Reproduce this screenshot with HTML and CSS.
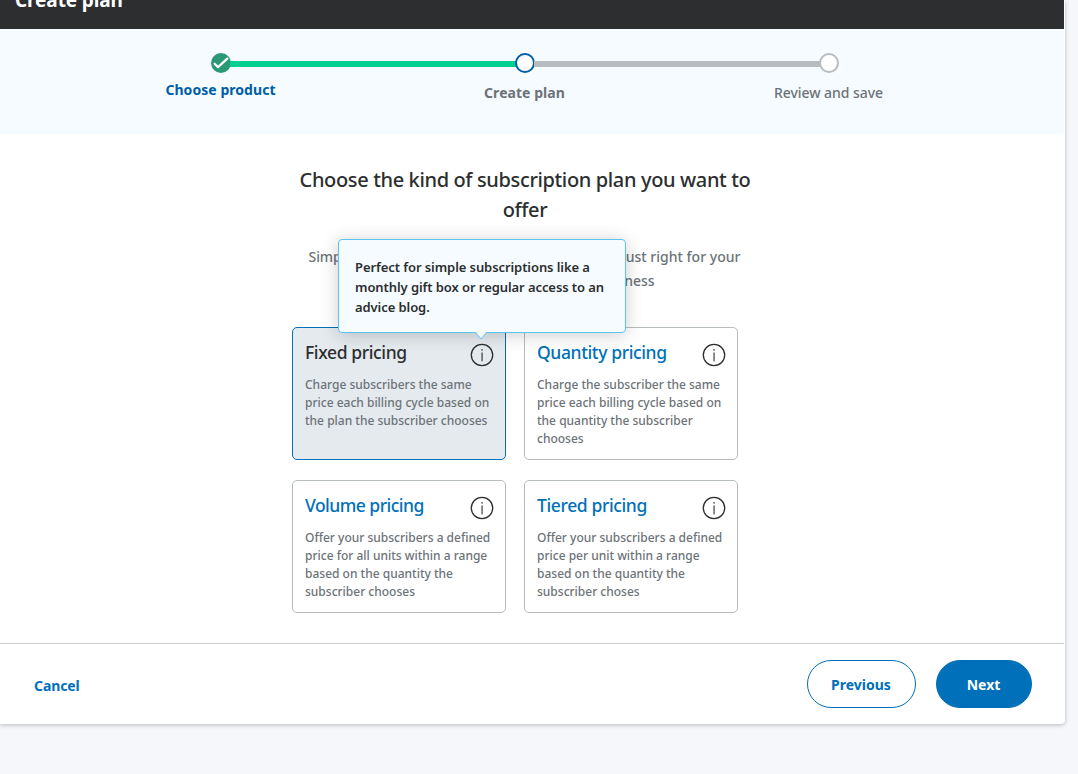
FILE: index.html
```html
<!DOCTYPE html>
<html lang="en">
<head>
<meta charset="utf-8">
<title>Create plan</title>
<link rel="stylesheet" href="styles.css">
</head>
<body>
<svg class="defs" aria-hidden="true"><symbol id="info" viewBox="0 0 24 24"><circle cx="12" cy="12" r="10.7" fill="none" stroke="#2c2e2f" stroke-width="1.3"/><rect x="11.5" y="9.5" width="1.1" height="8.8" fill="#2c2e2f"/><rect x="11.4" y="6.2" width="1.3" height="1.4" fill="#2c2e2f"/></symbol></svg>
<div class="panel">
  <header class="header"><span class="header-title">Create plan</span></header>
  <nav class="stepper">
    <div class="track">
      <svg class="dot" viewBox="0 0 20 20"><circle cx="10" cy="10" r="10" fill="#299976"/><path d="M3.6 10.7 7 14.1 16.3 5.6" fill="none" stroke="#fff" stroke-width="2.2" stroke-linecap="round" stroke-linejoin="round"/></svg>
      <span class="bar bar-done"></span>
      <span class="dot ring ring-current"></span>
      <span class="bar"></span>
      <span class="dot ring"></span>
    </div>
    <div class="labels">
      <span class="label label-done">Choose product</span>
      <span class="label label-current">Create plan</span>
      <span class="label">Review and save</span>
    </div>
  </nav>
  <main class="content">
    <h1 class="title">Choose the kind of subscription plan you want to<br>offer</h1>
    <div class="intro">
      <div class="intro-line"><span>Simple, flexible pricing that’s</span><span class="intro-end">just right for your</span></div>
      <div class="intro-line intro-second"><span>customers and your</span><span>business</span></div>
    </div>
    <div class="grid">
      <section class="card selected">
        <div class="card-head"><h2>Fixed pricing</h2><svg class="info"><use href="#info"/></svg></div>
        <p>Charge subscribers the same<br>price each billing cycle based on<br>the plan the subscriber chooses</p>
        <div class="tooltip">Perfect for simple subscriptions like a<br>monthly gift box or regular access to an<br>advice blog.<svg class="arrow" viewBox="0 0 14 9"><path d="M1 0 7 8.3 13 0Z" fill="#f5fbff"/><path d="M1.4 1.4 7 8 12.6 1.4" fill="none" stroke="#5bc4f3"/></svg></div>
      </section>
      <section class="card">
        <div class="card-head"><h2>Quantity pricing</h2><svg class="info"><use href="#info"/></svg></div>
        <p>Charge the subscriber the same<br>price each billing cycle based on<br>the quantity the subscriber<br>chooses</p>
      </section>
      <section class="card">
        <div class="card-head"><h2 class="tight">Volume pricing</h2><svg class="info"><use href="#info"/></svg></div>
        <p>Offer your subscribers a defined<br>price for all units within a range<br>based on the quantity the<br>subscriber chooses</p>
      </section>
      <section class="card">
        <div class="card-head"><h2>Tiered pricing</h2><svg class="info"><use href="#info"/></svg></div>
        <p>Offer your subscribers a defined<br>price per unit within a range<br>based on the quantity the<br>subscriber choses</p>
      </section>
    </div>
  </main>
  <footer class="footer">
    <a class="cancel">Cancel</a>
    <div class="actions"><button class="btn previous">Previous</button><button class="btn next">Next</button></div>
  </footer>
</div>
</body>
</html>
```

FILE: styles.css
```css
* { box-sizing: border-box; }
body { margin: 0; height: 774px; overflow: hidden; background: #f5f7fb; font-family: "Noto Sans", "Open Sans", sans-serif; color: #2c2e2f; }
.defs { display: none; }
.panel { width: 1065px; height: 724px; padding-right: 1px; background: #fff; border-radius: 0 0 4px 0; box-shadow: 0 1px 4px rgba(0,0,0,.25); display: flex; flex-direction: column; }
.header { height: 29px; flex: none; background: #2c2e2f; overflow: hidden; padding-left: 15px; }
.header-title { display: block; margin-top: -13px; color: #fff; font-size: 19px; line-height: 26px; font-weight: 700; letter-spacing: -.1px; }
.stepper { height: 105px; flex: none; background: #f5fbff; padding: 24px 15px 0 0; }
.track { width: 628px; margin: 0 auto; display: flex; align-items: center; position: relative; }
.dot { width: 20px; height: 20px; flex: none; }
.ring { border: 2px solid #b7bcbf; border-radius: 50%; background: #fff; }
.ring-current { border-color: #005ea6; }
.stepper .track { margin-left: 211px; }
.bar { flex: 1; height: 6px; margin: 1px -1px 0; background: #b7bcbf; }
.bar-done { background: #00cf92; }
.labels { width: 912px; margin: 0 auto; display: grid; grid-template-columns: repeat(3, 304px); text-align: center; font-size: 14px; line-height: 20px; }
.label { padding-top: 10px; color: #6c7378; font-weight: 500; letter-spacing: -.04px; }
.label-done { padding-top: 7px; color: #005ea6; font-weight: 700; letter-spacing: .05px; }
.label-current { font-weight: 700; letter-spacing: .05px; }
.content { padding: 31px 14px 0 0; height: 509px; flex: none; }
.title { margin: 0; text-align: center; font-size: 20px; line-height: 30px; font-weight: 500; letter-spacing: -.36px; white-space: nowrap; }
.intro { width: 433px; margin: 20px auto 0; color: #6c7378; font-size: 14px; line-height: 24px; font-weight: 500; letter-spacing: -.06px; }
.intro-line { display: flex; justify-content: space-between; white-space: nowrap; padding-right: 1px; }
.intro-end { letter-spacing: .02px; }
.intro-second { padding: 0 87px 0 86px; }
.grid { width: 446px; margin: 34px auto 0 292px; display: grid; grid-template-columns: 214px 214px; grid-auto-rows: 133px; gap: 20px 18px; }
.card { position: relative; border: 1px solid #b7bcbf; border-radius: 5px; padding: 10px 11px 0 12px; white-space: nowrap; }
.selected { z-index: 1; background: #e4eaee; border-color: #0070ba; }
.card-head { display: flex; justify-content: space-between; height: 38px; }
.card h2 { margin: 0; font-size: 17.5px; line-height: 28px; font-weight: 500; letter-spacing: -.38px; color: #0070ba; }
.card h2.tight { letter-spacing: -.52px; }
.card.selected h2 { color: #2c2e2f; }
.info { width: 24px; height: 24px; margin-top: 5px; }
.card p { margin: 0; color: #6c7378; font-size: 12px; line-height: 18px; font-weight: 500; }
.tooltip { position: absolute; z-index: 2; left: 45px; top: -89px; width: 288px; height: 94px; padding: 17px 15px 17px 16px; border: 1px solid #5bc4f3; border-radius: 4px; background: #f5fbff; box-shadow: 0 2px 18px rgba(0,0,0,.2); font-size: 13px; line-height: 20px; font-weight: 600; letter-spacing: -.08px; }
.arrow { position: absolute; left: 135px; top: 91px; width: 14px; height: 9px; }
.footer { flex: 1; border-top: 1px solid #cbcfd1; display: flex; justify-content: space-between; padding: 16px 32px 0 34px; font-size: 14px; font-weight: 700; }
.cancel { color: #0070ba; line-height: 20px; margin-top: 16px; letter-spacing: -.1px; }
.actions { display: flex; gap: 20px; }
.btn { height: 48px; border-radius: 24px; border: 1px solid #0070ba; font: inherit; padding: 0 1px 0 0; }
.previous { width: 109px; background: #fff; color: #0070ba; }
.next { width: 96px; background: #0070ba; color: #fff; }
```
